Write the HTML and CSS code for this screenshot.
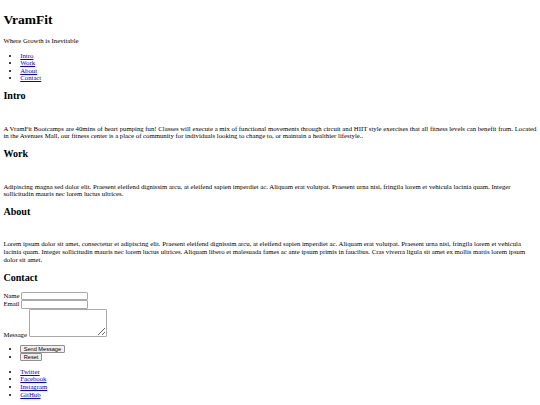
FILE: index.html
```html
<!DOCTYPE html>
<html lang="en">
<head>
    <meta charset="UTF-8">
    <meta name="viewport" content="width=device-width, initial-scale=1.0">
    <title>VramFit</title>
    <link rel="stylesheet" href="styles.css">
</head>
<body class="page">
    <header>
        <h1>VramFit</h1>
        <p>Where Growth is Inevitable</p>
        <ul>
            <li><a href="#intro">Intro</a></li>
            <li><a href="#work">Work</a></li>
            <li><a href="#about">About</a></li>
            <li><a href="#contact">Contact</a></li>
        </ul>
    </header>

    <section id="intro">
        <h2>Intro</h2>
        <div class="pic"></div>
        <p>A VramFit Bootcamps are 40mins of heart pumping fun! Classes will execute a mix of functional movements through circuit and HIIT style exercises that all fitness levels can benefit from. Located in the Avenues Mall, our fitness center is a place of community for individuals looking to change to, or maintain a healthier lifestyle..</p>
    </section>

    <section id="work">
        <h2>Work</h2>
        <div class="pic"></div>
        <p>Adipiscing magna sed dolor elit. Praesent eleifend dignissim arcu, at eleifend sapien imperdiet ac. Aliquam erat volutpat. Praesent urna nisi, fringila lorem et vehicula lacinia quam. Integer sollicitudin mauris nec lorem luctus ultrices.</p>
    </section>

    <section id="about">
        <h2>About</h2>
        <div class="pic"></div>
        <p>Lorem ipsum dolor sit amet, consectetur et adipiscing elit. Praesent eleifend dignissim arcu, at eleifend sapien imperdiet ac. Aliquam erat volutpat. Praesent urna nisi, fringila lorem et vehicula lacinia quam. Integer sollicitudin mauris nec lorem luctus ultrices. Aliquam libero et malesuada fames ac ante ipsum primis in faucibus. Cras viverra ligula sit amet ex mollis mattis lorem ipsum dolor sit amet.</p>
    </section>

    <section id="contact">
        <h2>Contact</h2>
        <form>
            <label for="name">Name</label>
            <input class="field" type="text" id="name" name="name"><br>
            <label for="email">Email</label>
            <input class="field" type="email" id="email" name="email"><br>
            <label for="message">Message</label>
            <textarea class="message" id="message" name="message"></textarea>
            <ul>
                <li><input class="btn" type="submit" value="Send Message"></li>
                <li><input class="btn" type="reset" value="Reset"></li>
            </ul>
        </form>
        <ul>
            <li><a href="#">Twitter</a></li>
            <li><a href="#">Facebook</a></li>
            <li><a href="#">Instagram</a></li>
            <li><a href="#">GitHub</a></li>
        </ul>
    </section>
</body>
</html>
```

FILE: styles.css
```css
.page {
    font-family: "Liberation Serif", serif;
    font-size: 6.75px;
    line-height: 7.6px;
    color: #000;
    margin: 3.375px;
}
h1 {
    font-size: 13.5px;
    line-height: 15.6px;
    margin: 9.1px 0;
}
h2 {
    font-size: 10.125px;
    line-height: 11.6px;
    margin: 8.4px 0;
}
p {
    margin: 6.75px 0;
}
ul {
    margin: 6.75px 0;
    padding-left: 16.875px;
}
a {
    color: #0000ee;
}
.pic {
    height: 7.6px;
}
.field {
    box-sizing: border-box;
    width: 67px;
    height: 8.6px;
    padding: 0 1px;
    margin: 0;
    border: 1px solid #a9a9a9;
    border-radius: 1px;
    font-size: 5.6px;
    font-family: "Liberation Sans", sans-serif;
}
.message {
    box-sizing: border-box;
    width: 78px;
    height: 28px;
    padding: 1px;
    margin: 0;
    border: 1px solid #a9a9a9;
    border-radius: 1px;
    font-size: 5.6px;
    font-family: "Liberation Mono", monospace;
}
.btn {
    box-sizing: border-box;
    height: 8px;
    padding: 0 2.5px;
    margin: 0;
    border: 1px solid #8f8f8f;
    border-radius: 1px;
    background: #efefef;
    font-size: 5.6px;
    font-family: "Liberation Sans", sans-serif;
    color: #000;
}
```
